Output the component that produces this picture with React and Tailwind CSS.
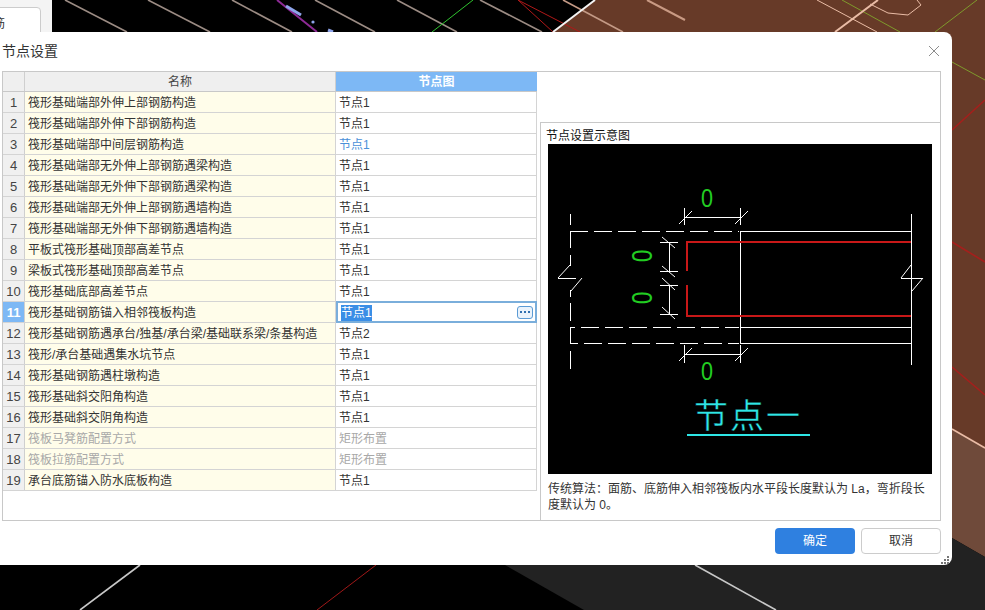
import React from 'react';

const rows = [
  { name: '筏形基础端部外伸上部钢筋构造', value: '节点1' },
  { name: '筏形基础端部外伸下部钢筋构造', value: '节点1' },
  { name: '筏形基础端部中间层钢筋构造', value: '节点1', blue: true },
  { name: '筏形基础端部无外伸上部钢筋遇梁构造', value: '节点1' },
  { name: '筏形基础端部无外伸下部钢筋遇梁构造', value: '节点1' },
  { name: '筏形基础端部无外伸上部钢筋遇墙构造', value: '节点1' },
  { name: '筏形基础端部无外伸下部钢筋遇墙构造', value: '节点1' },
  { name: '平板式筏形基础顶部高差节点', value: '节点1' },
  { name: '梁板式筏形基础顶部高差节点', value: '节点1' },
  { name: '筏形基础底部高差节点', value: '节点1' },
  { name: '筏形基础钢筋锚入相邻筏板构造', value: '节点1', active: true },
  { name: '筏形基础钢筋遇承台/独基/承台梁/基础联系梁/条基构造', value: '节点2' },
  { name: '筏形/承台基础遇集水坑节点', value: '节点1' },
  { name: '筏形基础钢筋遇柱墩构造', value: '节点1' },
  { name: '筏形基础斜交阳角构造', value: '节点1' },
  { name: '筏形基础斜交阴角构造', value: '节点1' },
  { name: '筏板马凳筋配置方式', value: '矩形布置', muted: true },
  { name: '筏板拉筋配置方式', value: '矩形布置', muted: true },
  { name: '承台底筋锚入防水底板构造', value: '节点1' },
];

// the CAD canvas behind the dialog
const Backdrop = () => (
  <svg className="absolute inset-0" width="985" height="610" viewBox="0 0 985 610">
    <rect width="985" height="610" fill="#000" />
    <polygon points="595,0 985,0 985,448 952,429 540,42" fill="#673a28" />
    <polygon points="540,42 952,429 985,448 985,557 952,538" fill="#6f4a3a" />
    <polygon points="440,500 952,538 985,557 985,610 584,610 505,565" fill="#222222" />
    <rect x="0" y="0" width="52" height="32" fill="#f4f4f4" />
    {[[65, 127], [148, 210], [232, 292], [315, 375], [397, 457], [480, 542]].map(([a, b]) => (
      <line key={a} x1={a} y1="0" x2={b} y2="32" stroke="#9c8c84" strokeWidth="1.6" />
    ))}
    <line x1="563" y1="0" x2="623" y2="32" stroke="#c49a86" strokeWidth="1.6" />
    <line x1="647" y1="0" x2="685" y2="20" stroke="#c99a84" strokeWidth="2" />
    <line x1="277" y1="0" x2="317" y2="32" stroke="#8e2a96" strokeWidth="2" />
    <line x1="286" y1="6" x2="301" y2="15" stroke="#8ea4ea" strokeWidth="3" />
    <circle cx="313" cy="22" r="1.6" fill="#8ea4ea" />
    <line x1="328" y1="30" x2="333" y2="32" stroke="#8ea4ea" strokeWidth="3" />
    <line x1="473" y1="0" x2="432" y2="32" stroke="#2fc42f" strokeWidth="1" />
    <line x1="518" y1="0" x2="553" y2="32" stroke="#b01818" strokeWidth="1" />
    <line x1="518" y1="0" x2="580" y2="32" stroke="#b01818" strokeWidth="1" />
    <line x1="595" y1="0" x2="553" y2="32" stroke="#f4f4f4" strokeWidth="2" />
    <line x1="842" y1="0" x2="900" y2="32" stroke="#7f9a2c" strokeWidth="1" />
    <line x1="977" y1="0" x2="935" y2="32" stroke="#7f9a2c" strokeWidth="1" />
    <line x1="952" y1="62" x2="985" y2="80" stroke="#7f9a2c" strokeWidth="1" />
    <line x1="878" y1="0" x2="835" y2="32" stroke="#eabca6" strokeWidth="2" />
    <line x1="817" y1="0" x2="877" y2="32" stroke="#eabca6" strokeWidth="1" />
    <polyline points="870,4 888,13 908,15 921,5 917,0" fill="none" stroke="#eabca6" strokeWidth="1" />
    <line x1="952" y1="130" x2="985" y2="100" stroke="#a51f1c" strokeWidth="1.6" />
    <line x1="952" y1="242" x2="985" y2="262" stroke="#a51f1c" strokeWidth="1.6" />
    <line x1="952" y1="367" x2="985" y2="395" stroke="#a51f1c" strokeWidth="1.6" />
    <line x1="952" y1="429" x2="985" y2="448" stroke="#eabca6" strokeWidth="1.6" />
    <line x1="140" y1="565" x2="80" y2="610" stroke="#c8c8c8" strokeWidth="1.6" />
    <line x1="376" y1="565" x2="317" y2="610" stroke="#a01818" strokeWidth="1" />
    <line x1="695" y1="565" x2="776" y2="610" stroke="#c8c8c8" strokeWidth="1.6" />
  </svg>
);

// node drawing, coordinates are page pixels (viewBox starts at the box corner)
const NodeDrawing = () => {
  const ticks = [
    [679, 224, 692, 211], [735, 224, 748, 211], [679, 361, 692, 348], [735, 361, 748, 348],
    [662, 237, 675, 248], [662, 266, 675, 277], [662, 278, 675, 290], [662, 307, 675, 319],
  ];
  const thin = [
    [911.5, 214, 911.5, 365], [740.5, 231, 740.5, 344],
    [740, 231.5, 911, 231.5], [740, 327.5, 911, 327.5], [740, 343.5, 911, 343.5],
    [684.5, 208, 684.5, 225], [740.5, 208, 740.5, 225], [684, 217.5, 740, 217.5],
    [684.5, 345, 684.5, 363], [740.5, 345, 740.5, 363], [684, 354.5, 740, 354.5],
    [669.5, 242, 669.5, 271], [669.5, 285, 669.5, 314],
    [660, 242.5, 678, 242.5], [660, 271.5, 678, 271.5], [660, 285.5, 678, 285.5], [660, 314.5, 678, 314.5],
    [558, 278.5, 576, 278.5], [558, 278, 570, 265], [582, 278, 571, 291],
    [901, 278.5, 923, 278.5], [901, 278, 911, 265], [923, 278, 912, 291],
    [570.5, 214, 570.5, 225], [570.5, 231, 570.5, 248], [570.5, 255, 570.5, 266],
    [570.5, 290, 570.5, 297], [570.5, 303, 570.5, 321], [570.5, 327, 570.5, 344], [570.5, 351, 570.5, 369],
  ];
  return (
    <svg className="block w-[384px] h-[330px] bg-black" viewBox="548 144 384 330">
      {[...thin, ...ticks].map((l, i) => (
        <line key={i} x1={l[0]} y1={l[1]} x2={l[2]} y2={l[3]} stroke="#fff" strokeWidth="1" />
      ))}
      <line x1="570" y1="231.5" x2="739" y2="231.5" stroke="#fff" strokeDasharray="18 6" />
      <line x1="570" y1="327.5" x2="739" y2="327.5" stroke="#fff" strokeDasharray="18 6" strokeDashoffset="13" />
      <line x1="570" y1="343.5" x2="739" y2="343.5" stroke="#fff" strokeDasharray="18 6" strokeDashoffset="10" />
      <polyline points="911,242 687,242 687,271" fill="none" stroke="#c81818" strokeWidth="2" />
      <polyline points="687,285 687,316 911,316" fill="none" stroke="#c81818" strokeWidth="2" />
      <g fill="#22cc22" fontFamily="'Liberation Sans', sans-serif" fontSize="24" textAnchor="middle">
        <text transform="translate(707 207) scale(0.9 1.05)">0</text>
        <text transform="translate(707 380) scale(0.9 1.05)">0</text>
        <text transform="translate(642 256) rotate(-90) scale(0.95 1.25)" y="8">0</text>
        <text transform="translate(642 298) rotate(-90) scale(0.95 1.25)" y="8">0</text>
      </g>
      <text
        x="694"
        y="428"
        fill="#2ee6e6"
        stroke="#000"
        strokeWidth="0.4"
        fontFamily="'Noto Sans CJK SC', sans-serif"
        fontSize="34"
        letterSpacing="2"
      >
        节点一
      </text>
      <rect x="687" y="434" width="123" height="2" fill="#2ee6e6" />
    </svg>
  );
};

const Row = ({ index, row }) => (
  <div className="flex h-[21px] border-b border-[#d4d4d4] leading-[22px]">
    <div
      className={`w-[22px] shrink-0 border-r border-[#cfcfcf] text-center text-[13px] ${
        row.active ? 'bg-[#7db8f5] font-bold text-white' : 'bg-[#f0f0f0] text-[#444]'
      }`}
    >
      {index}
    </div>
    <div
      className={`w-[311px] shrink-0 border-r border-[#d4d4d4] bg-[#fffdea] pl-[3px] whitespace-nowrap ${
        row.muted ? 'text-[#a8a8a8]' : 'text-[#333]'
      }`}
    >
      {row.name}
    </div>
    {row.active ? (
      <div className="flex w-[201px] shrink-0 items-center justify-between border-2 border-[#7aaedb] bg-white pl-[3px] pr-[2px] -mt-px h-[22px]">
        <span className="mt-px bg-[#3a8ee6] leading-[16px] text-white">{row.value}</span>
        <span className="flex h-[13px] w-[16px] items-center justify-center gap-[2px] rounded-[3px] border border-[#5b9bd5] bg-[#eaf3fc]">
          <i className="h-[2px] w-[2px] bg-[#2f6fb0]" />
          <i className="h-[2px] w-[2px] bg-[#2f6fb0]" />
          <i className="h-[2px] w-[2px] bg-[#2f6fb0]" />
        </span>
      </div>
    ) : (
      <div
        className={`w-[201px] shrink-0 border-r border-[#d4d4d4] pl-[3px] ${
          row.blue ? 'text-[#4a90d9]' : row.muted ? 'text-[#a8a8a8]' : 'text-[#333]'
        }`}
      >
        {row.value}
      </div>
    )}
  </div>
);

const App = () => {
  return (
    <div className="relative h-[610px] w-[985px] overflow-hidden font-['Liberation_Sans','Noto_Sans_CJK_SC',sans-serif] text-xs">
      <Backdrop />

      {/* button of the main window, cut by the dialog */}
      <div className="absolute left-[-40px] top-[7px] flex h-[26px] w-[81px] items-end justify-end rounded-tr border border-[#ccc] bg-white pr-[35px] text-[#333]">
        筋
      </div>

      {/* Dialog */}
      <div className="absolute left-0 top-[32px] flex h-[533px] w-[952px] flex-col rounded-r-lg bg-white">
        <div className="flex h-[39px] shrink-0 items-center justify-between pb-[1px] pl-[2px] pr-[12px]">
          <span className="text-sm text-[#333]">节点设置</span>
          <svg width="12" height="12" viewBox="0 0 12 12" stroke="#8c8c8c" strokeWidth="1">
            <path d="M1 1l10 10M11 1L1 11" />
          </svg>
        </div>

        <div className="ml-[2px] flex h-[450px] w-[939px] shrink-0 border border-[#c8c8c8]">
          {/* Table */}
          <div className="w-[534px] shrink-0">
            <div className="flex h-[20px] border-b border-[#c8c8c8] leading-[21px] text-[#444]">
              <div className="w-[22px] shrink-0 border-r border-[#cfcfcf] bg-[#efefef]" />
              <div className="w-[311px] shrink-0 border-r border-[#cfcfcf] bg-[#efefef] text-center">名称</div>
              <div className="w-[201px] shrink-0 bg-[#7db8f5] text-center font-bold text-white">节点图</div>
            </div>
            {rows.map((row, i) => (
              <Row key={i} index={i + 1} row={row} />
            ))}
          </div>

          {/* Preview */}
          <div className="flex min-w-0 flex-1 flex-col pl-[3px]">
            <div className="mt-[50px] h-[399px] border-l border-t border-[#c8c8c8] px-[7px]">
              <div className="-ml-[2px] h-[21px] pt-[5px] leading-[16px] text-[#111]">节点设置示意图</div>
              <NodeDrawing />
              <p className="mt-[7px] w-[384px] leading-[16px] text-[#333]">
                传统算法：面筋、底筋伸入相邻筏板内水平段长度默认为 La，弯折段长度默认为 0。
              </p>
            </div>
          </div>
        </div>

        <div className="relative flex flex-1 items-start justify-end gap-[6px] pr-[11px] pt-[7px]">
          <button className="h-[26px] w-[80px] rounded bg-[#2f80e0] text-white">确定</button>
          <button className="h-[26px] w-[80px] rounded border border-[#ccc] bg-white text-[#333]">取消</button>
          <svg className="absolute bottom-[1px] right-[3px]" width="8" height="8" viewBox="0 0 8 8" fill="#777">
            <rect x="6" y="0" width="2" height="2" />
            <rect x="3" y="3" width="2" height="2" />
            <rect x="6" y="3" width="2" height="2" />
            <rect x="0" y="6" width="2" height="2" />
            <rect x="3" y="6" width="2" height="2" />
            <rect x="6" y="6" width="2" height="2" />
          </svg>
        </div>
      </div>
    </div>
  );
};

export default App;
